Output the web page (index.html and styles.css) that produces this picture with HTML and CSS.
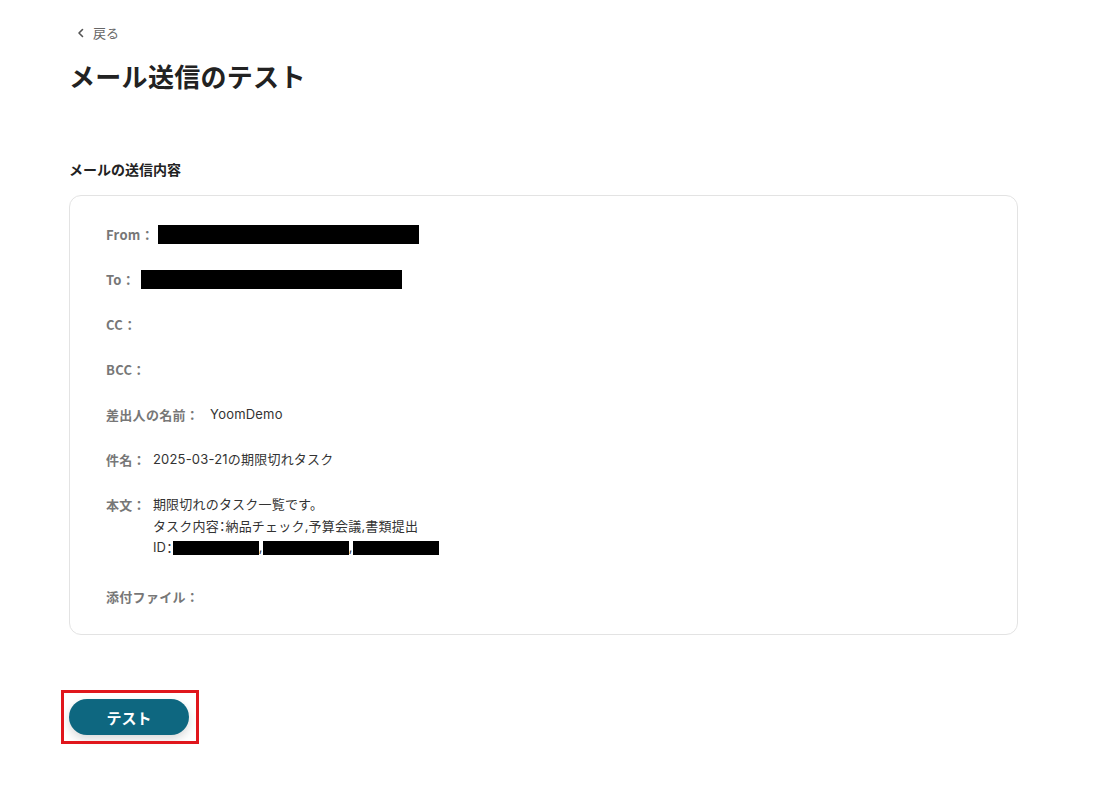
FILE: index.html
```html
<!DOCTYPE html>
<html lang="ja">
<head>
<meta charset="utf-8">
<link rel="stylesheet" href="styles.css">
</head>
<body>
<div class="page">
  <a class="back" href="#">
    <svg class="chev" width="10" height="10" viewBox="0 0 10 10"><path d="M6.5 1.5 L3 5 L6.5 8.5" fill="none" stroke="#555" stroke-width="1.6" stroke-linecap="round" stroke-linejoin="round"/></svg>
    <span>戻る</span>
  </a>
  <h1 class="title">メール送信のテスト</h1>
  <h2 class="section">メールの送信内容</h2>
  <div class="card">
    <div class="row"><span class="label">From：</span><span class="redact r-from"></span></div>
    <div class="row"><span class="label">To：</span><span class="redact r-to"></span></div>
    <div class="row"><span class="label">CC：</span></div>
    <div class="row"><span class="label">BCC：</span></div>
    <div class="row"><span class="label">差出人の名前：</span><span class="value v-sender">YoomDemo</span></div>
    <div class="row"><span class="label">件名：</span><span class="value">2025-03-21の期限切れタスク</span></div>
    <div class="row body-row"><span class="label">本文：</span>
      <div class="value lines">
        <div>期限切れのタスク一覧です。</div>
        <div>タスク内容<span class="half">：</span>納品チェック,予算会議,書類提出</div>
        <div class="idline">ID<span class="half">：</span><span class="redact r-id"></span>,<span class="redact r-id"></span>,<span class="redact r-id"></span></div>
      </div>
    </div>
    <div class="row attach"><span class="label">添付ファイル：</span></div>
  </div>
  <div class="actions">
    <div class="btn-wrap">
      <button class="btn">テスト</button>
      <div class="highlight"></div>
    </div>
  </div>
</div>
</body>
</html>
```

FILE: styles.css
```css
* { box-sizing: border-box; }
html, body { margin: 0; padding: 0; background: #fff; }
body {
  font-family: "Noto Sans CJK JP", "Noto Sans", sans-serif;
  color: #333;
  width: 1094px;
  height: 791px;
  overflow: hidden;
}
.page {
  padding: 22px 0 0 69px;
  width: 1018px;
}
.back {
  display: flex;
  align-items: center;
  gap: 7px;
  margin-left: 7px;
  text-decoration: none;
  color: #666;
  font-size: 13px;
  line-height: 22px;
  height: 22px;
}
.chev { display: block; }
.title {
  margin: 13px 0 0 0;
  font-size: 26px;
  font-weight: 700;
  color: #222;
  line-height: 38px;
  letter-spacing: 0.3px;
}
.section {
  margin: 64px 0 0 0;
  font-size: 14px;
  font-weight: 700;
  color: #222;
  line-height: 20px;
}
.card {
  margin-top: 16px;
  width: 949px;
  border: 1px solid #e3e3e3;
  border-radius: 12px;
  padding: 28px 36px 27px 36px;
  display: flex;
  flex-direction: column;
  gap: 24px;
}
.row {
  display: flex;
  align-items: center;
  min-height: 21px;
  font-size: 13px;
  line-height: 21px;
}
.label {
  color: #777;
  font-weight: 700;
  flex: none;
  letter-spacing: 0.3px;
}
.value {
  color: #333;
  margin-left: 7px;
  font-family: "Inter", "Noto Sans CJK JP", sans-serif;
  letter-spacing: 0.2px;
}
.v-sender { margin-left: 11px; }
.half {
  font-family: "Noto Sans CJK JP", sans-serif;
  font-feature-settings: "halt";
  letter-spacing: 0;
}
.redact {
  display: inline-block;
  background: #000;
  height: 19px;
}
.r-from { width: 261px; margin-left: 4px; }
.r-to { width: 261px; margin-left: 6px; }
.body-row { align-items: flex-start; }
.idline { display: flex; align-items: center; }
.r-id { width: 86px; height: 14px; }
.attach { margin-top: 4px; }
.actions {
  margin-top: 64px;
}
.btn-wrap {
  position: relative;
  display: inline-block;
}
.btn {
  display: block;
  width: 120px;
  height: 36px;
  border: none;
  border-radius: 18px;
  background: #0e6780;
  color: #fff;
  font-family: "Noto Sans CJK JP", "Noto Sans", sans-serif;
  font-size: 15px;
  font-weight: 700;
  box-shadow: 0 4px 10px rgba(0, 0, 0, 0.15);
}
.highlight {
  position: absolute;
  left: -8px;
  top: -9px;
  width: 138px;
  height: 54px;
  border: 3px solid #e0161c;
}
```
